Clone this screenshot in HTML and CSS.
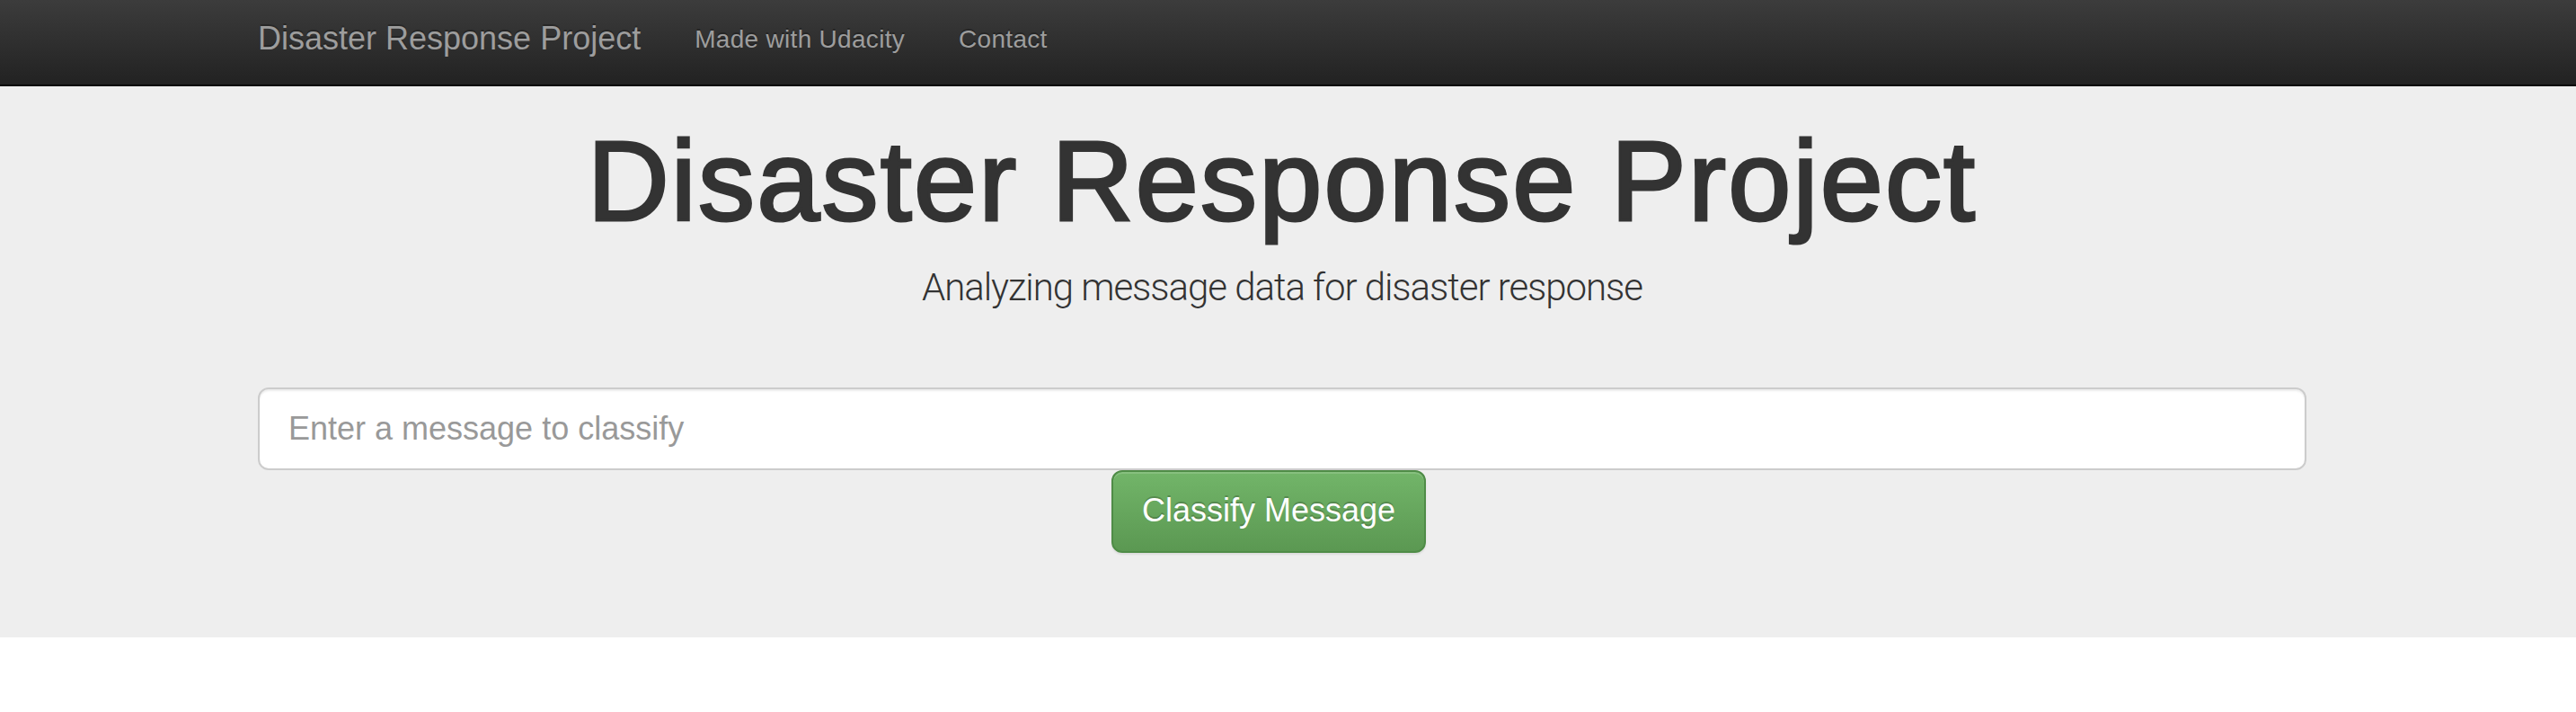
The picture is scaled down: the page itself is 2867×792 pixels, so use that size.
FILE: index.html
```html
<!DOCTYPE html>
<html lang="en">
<head>
<meta charset="utf-8">
<title>Disasters</title>
<link rel="stylesheet" href="styles.css">
</head>
<body>
<nav class="navbar">
  <div class="container navbar-inner">
    <a class="brand" href="#">Disaster Response Project</a>
    <ul class="nav">
      <li><a href="#">Made with Udacity</a></li>
      <li><a href="#">Contact</a></li>
    </ul>
  </div>
</nav>
<div class="jumbotron">
  <div class="container">
    <h1 class="title">Disaster Response Project</h1>
    <p class="lead">Analyzing message data for disaster response</p>
    <form class="classify-form">
      <input type="text" class="query" name="query" placeholder="Enter a message to classify">
      <div class="submit-row">
        <button type="submit" class="btn-success">Classify Message</button>
      </div>
    </form>
  </div>
</div>
</body>
</html>
```

FILE: styles.css
```css
* {
  box-sizing: border-box;
}

html,
body {
  margin: 0;
  padding: 0;
  background: #fff;
}

body {
  font-family: "Liberation Sans", Arial, sans-serif;
  color: #333;
}

.container {
  width: 2340px;
  margin: 0 auto;
  padding: 0 30px;
}

/* Navbar */
.navbar {
  background: linear-gradient(to bottom, #3c3c3c 0%, #222 100%);
  border-bottom: 2px solid #080808;
  padding-right: 13px;
}

.navbar-inner {
  display: flex;
  align-items: flex-start;
  height: 94px;
}

.brand {
  display: block;
  margin-left: -30px;
  padding: 23px 30px 0;
  font-size: 36px;
  line-height: 40px;
  color: #9d9d9d;
  text-decoration: none;
  text-shadow: 0 -2px 0 rgba(0, 0, 0, 0.25);
}

.nav {
  display: flex;
  list-style: none;
  margin: 0;
  padding: 0;
}

.nav a {
  display: block;
  padding: 24px 30px 0;
  font-size: 28px;
  line-height: 40px;
  letter-spacing: 0.3px;
  color: #9d9d9d;
  text-decoration: none;
  text-shadow: 0 -2px 0 rgba(0, 0, 0, 0.25);
}

/* Jumbotron */
.jumbotron {
  background: #eee;
  padding: 37px 13px 94px 0;
}

.title {
  margin: 0;
  font-size: 126px;
  line-height: 1.1;
  font-weight: normal;
  text-align: center;
  letter-spacing: 2.2px;
  color: #333;
  -webkit-text-stroke: 3px #333;
}

.lead {
  margin: 19px 0 82px;
  font-family: "Roboto", "Liberation Sans", sans-serif;
  font-weight: 300;
  font-size: 42px;
  line-height: 58px;
  letter-spacing: -1.05px;
  text-align: center;
  color: #333;
}

.classify-form {
  margin: 0;
}

.query {
  display: block;
  width: 100%;
  height: 92px;
  margin: 0;
  padding: 0 32px;
  font-family: inherit;
  font-size: 36px;
  color: #555;
  background: #fff;
  border: 2px solid #ccc;
  border-radius: 12px;
  box-shadow: inset 0 2px 2px rgba(0, 0, 0, 0.075);
  outline: none;
}

.query::placeholder {
  color: #999;
}

.submit-row {
  display: flex;
  margin-left: 41.66666667%;
}

.btn-success {
  display: block;
  height: 92px;
  margin: 0;
  padding: 0 32px 2px;
  font-family: inherit;
  font-size: 36px;
  line-height: 86px;
  color: #fff;
  background: linear-gradient(to bottom, #72b569 0%, #5b9852 100%);
  border: 2px solid #4f8c47;
  border-radius: 12px;
  text-shadow: 0 -2px 0 rgba(0, 0, 0, 0.2);
  box-shadow: inset 0 2px 0 rgba(255, 255, 255, 0.15), 0 2px 2px rgba(0, 0, 0, 0.075);
  cursor: pointer;
}
```
